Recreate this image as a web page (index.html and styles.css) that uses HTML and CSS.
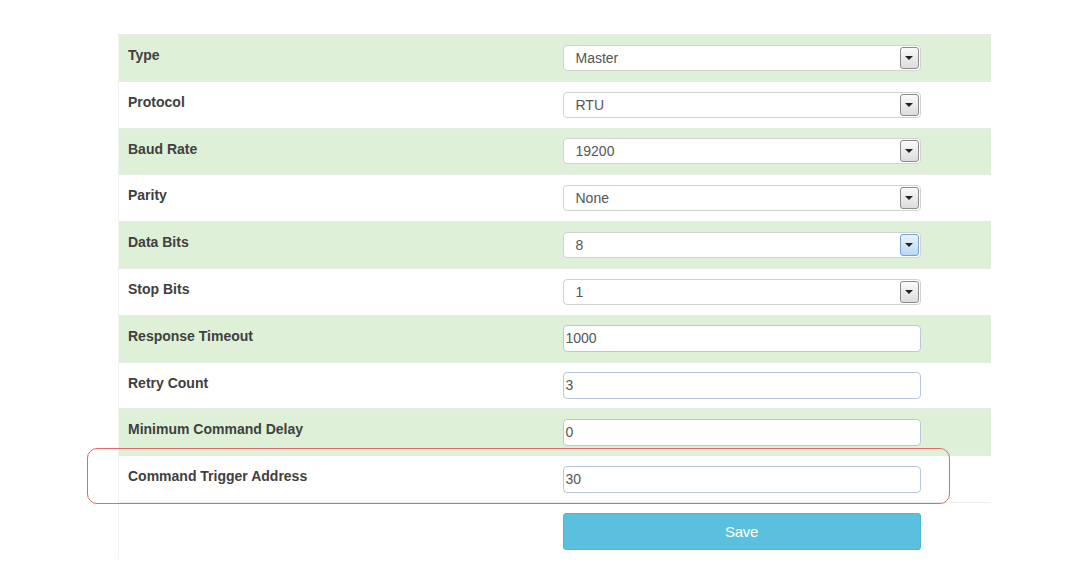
FILE: index.html
```html
<!DOCTYPE html>
<html>
<head>
<meta charset="utf-8">
<link rel="stylesheet" href="styles.css">
</head>
<body>
<div class="page">
  <table class="cfg">
    <tbody>
      <tr class="g"><td class="lbl">Type</td><td class="ctl"><div class="sel"><span class="val">Master</span><span class="arr"></span></div></td></tr>
      <tr><td class="lbl">Protocol</td><td class="ctl"><div class="sel"><span class="val">RTU</span><span class="arr"></span></div></td></tr>
      <tr class="g"><td class="lbl">Baud Rate</td><td class="ctl"><div class="sel"><span class="val">19200</span><span class="arr"></span></div></td></tr>
      <tr><td class="lbl">Parity</td><td class="ctl"><div class="sel"><span class="val">None</span><span class="arr"></span></div></td></tr>
      <tr class="g"><td class="lbl">Data Bits</td><td class="ctl"><div class="sel"><span class="val">8</span><span class="arr hover"></span></div></td></tr>
      <tr><td class="lbl">Stop Bits</td><td class="ctl"><div class="sel"><span class="val">1</span><span class="arr"></span></div></td></tr>
      <tr class="g"><td class="lbl">Response Timeout</td><td class="ctl"><div class="inp">1000</div></td></tr>
      <tr><td class="lbl">Retry Count</td><td class="ctl"><div class="inp">3</div></td></tr>
      <tr class="g"><td class="lbl">Minimum Command Delay</td><td class="ctl"><div class="inp">0</div></td></tr>
      <tr class="hl"><td class="lbl">Command Trigger Address</td><td class="ctl"><div class="inp">30</div></td></tr>
      <tr class="act"><td class="lbl"></td><td class="ctl"><div class="btn">Save</div></td></tr>
    </tbody>
  </table>
  <div class="mark"></div>
</div>
</body>
</html>
```
FILE: styles.css
```css
html, body {
  margin: 0;
  padding: 0;
  background: #fff;
}
.page {
  position: relative;
  width: 1082px;
  height: 575px;
  padding-top: 34px;
  box-sizing: border-box;
}
.cfg {
  margin-left: 118px;
  width: 873px;
  border-collapse: collapse;
  font-family: "Liberation Sans", Arial, sans-serif;
  border-top: 1px solid #eef0ee;
  border-left: 1px solid #f3f3f3;
}
.cfg td {
  height: 46.8px;
  box-sizing: border-box;
  border-top: 1px solid #e6ebe4;
  padding: 0;
}
.cfg tr.g td {
  background: #dff0d8;
}
.cfg .lbl {
  width: 437px;
  vertical-align: top;
  padding: 10px 10px 0 9px;
  font-size: 14px;
  line-height: 20px;
  font-weight: bold;
  color: #404040;
}
.cfg .ctl {
  vertical-align: middle;
  padding: 0 0 0 7px;
}
.sel {
  width: 358px;
  height: 26px;
  box-sizing: border-box;
  border: 1px solid #d2d2d2;
  border-radius: 4px;
  background: #fff;
  display: flex;
  align-items: center;
  justify-content: space-between;
  padding: 0 1px 0 12px;
  font-size: 14px;
  color: #555;
}
.arr {
  width: 19px;
  height: 22px;
  box-sizing: border-box;
  border: 1px solid #8a8a8a;
  border-radius: 3px;
  background: linear-gradient(#fafafa, #dcdcdc);
  display: flex;
  align-items: center;
  justify-content: center;
}
.arr::after {
  content: "";
  width: 0;
  height: 0;
  border-left: 4px solid transparent;
  border-right: 4px solid transparent;
  border-top: 4px solid #222;
}
.arr.hover {
  border-color: #7aa2cc;
  background: linear-gradient(#eaf4fc, #b8d8f2);
}
.inp {
  width: 358px;
  height: 27px;
  box-sizing: border-box;
  border: 1px solid #b9c6e0;
  border-radius: 4px;
  background: #fff;
  padding: 0 2px;
  font-size: 14px;
  line-height: 25px;
  color: #555;
}
.cfg tr.act td {
  border-top: 1px solid #eeeeee;
  height: 57px;
}
.btn {
  width: 358px;
  height: 37px;
  box-sizing: border-box;
  background: #5bc0de;
  border: 1px solid #4fb6d4;
  border-radius: 3px;
  color: #fff;
  font-size: 15px;
  text-align: center;
  line-height: 35px;
  letter-spacing: -0.3px;
}
.mark {
  position: absolute;
  left: 87px;
  top: 448px;
  width: 863px;
  height: 56px;
  box-sizing: border-box;
  border: 1.5px solid #e26a6a;
  border-radius: 10px;
}
```
